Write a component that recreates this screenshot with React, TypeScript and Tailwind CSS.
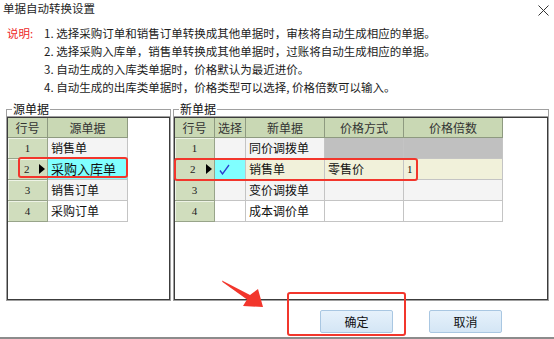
import React from "react";

const FONT = { fontFamily: '"Noto Sans CJK SC", "Noto Sans", sans-serif' };

function Tri() {
  return (
    <svg width="6" height="10" viewBox="0 0 6 10" className="shrink-0">
      <polygon points="0,0 6,5 0,10" fill="#000" />
    </svg>
  );
}

function NumCell({ n, w, mark, pl }: { n: string; w: string; mark?: boolean; pl?: string }) {
  return (
    <div
      className={`${w} h-full flex items-center bg-[#d0ddbd] border-r border-b border-[#98a48a] shadow-[inset_1px_1px_0_#eef3e6] text-[11px] text-[#222] ${mark ? `${pl} pr-[2px]` : "justify-center"}`}
      style={{ fontFamily: '"Liberation Serif", serif' }}
    >
      <span>{n}</span>
      {mark && (
        <span className="ml-auto flex">
          <Tri />
        </span>
      )}
    </div>
  );
}

function Head({ w, children }: { w: string; children?: React.ReactNode }) {
  return (
    <div className={`${w} h-full flex items-center justify-center bg-[#c9d8b4] border-r border-b border-[#8e9a80] text-[12px] text-[#333]`}>
      {children}
    </div>
  );
}

function Cell({ w, bg, children }: { w: string; bg: string; children?: React.ReactNode }) {
  return (
    <div className={`${w} h-full flex items-center pl-[3px] border-r border-b border-[#c4c4c4] text-[12px] text-[#111] ${bg}`}>
      {children}
    </div>
  );
}

function GroupLabel({ label }: { label: string }) {
  return (
    <div className="flex h-[14px]">
      <div className="w-[6px] h-[7px] self-end border-l border-t border-[#a0a0a0]" />
      <div className="text-[12px] leading-[14px] text-[#111] px-[1px]">{label}</div>
      <div className="flex-1 h-[7px] self-end border-r border-t border-[#a0a0a0]" />
    </div>
  );
}

function Frame({ children }: { children: React.ReactNode }) {
  return (
    <div className="h-[185px] border border-[#a0a0a0]">
      <div className="h-full border border-[#3c3c3c] bg-white">{children}</div>
    </div>
  );
}

export default function App() {
  return (
    <div className="w-[554px] h-[339px] bg-white relative overflow-hidden flex flex-col" style={FONT}>
      {/* title */}
      <div className="h-[24px] flex items-start justify-between pl-[3px] pr-[5px]">
        <div className="text-[11.5px] leading-[16px] text-[#1e1e1e]">单据自动转换设置</div>
        <svg width="11" height="11" viewBox="0 0 11 11" className="mt-[5px]">
          <path d="M0.5 0.5 L10.5 10.5 M10.5 0.5 L0.5 10.5" stroke="#333" strokeWidth="1" />
        </svg>
      </div>

      {/* explanation */}
      <div className="flex text-[11.5px] leading-[18px]">
        <div className="w-[44px] pl-[7px] text-[#ee2a2a]">说明:</div>
        <div className="text-[#1c1c1c]">
          <div>1. 选择采购订单和销售订单转换成其他单据时，审核将自动生成相应的单据。</div>
          <div>2. 选择采购入库单，销售单转换成其他单据时，过账将自动生成相应的单据。</div>
          <div>3. 自动生成的入库类单据时，价格默认为最近进价。</div>
          <div>4. 自动生成的出库类单据时，价格类型可以选择, 价格倍数可以输入。</div>
        </div>
      </div>

      {/* group boxes */}
      <div className="flex gap-[2px] pl-[6px] mt-[6px]">
        <div className="w-[165px]">
          <GroupLabel label="源单据" />
          <Frame>
            <div className="flex h-[20px]">
              <Head w="w-[40px]">行号</Head>
              <Head w="w-[80px]">源单据</Head>
            </div>
            <div className="flex h-[21px]">
              <NumCell n="1" w="w-[40px]" />
              <Cell w="w-[80px]" bg="bg-[#f4f4f4]">销售单</Cell>
            </div>
            <div className="flex h-[21px]">
              <NumCell n="2" w="w-[40px]" mark pl="pl-[16px]" />
              <Cell w="w-[80px]" bg="bg-[#80ffff]">
                <span className="text-[13px]">采购入库单</span>
              </Cell>
            </div>
            <div className="flex h-[21px]">
              <NumCell n="3" w="w-[40px]" />
              <Cell w="w-[80px]" bg="bg-[#f4f4f4]">销售订单</Cell>
            </div>
            <div className="flex h-[21px]">
              <NumCell n="4" w="w-[40px]" />
              <Cell w="w-[80px]" bg="bg-white">采购订单</Cell>
            </div>
          </Frame>
        </div>

        <div className="w-[376px]">
          <GroupLabel label="新单据" />
          <Frame>
            <div className="flex h-[20px]">
              <Head w="w-[40px]">行号</Head>
              <Head w="w-[31px]">选择</Head>
              <Head w="w-[79px]">新单据</Head>
              <Head w="w-[79px]">价格方式</Head>
              <Head w="w-[99px]">价格倍数</Head>
            </div>
            <div className="flex h-[21px]">
              <NumCell n="1" w="w-[40px]" />
              <Cell w="w-[31px]" bg="bg-[#f4f4f4]" />
              <Cell w="w-[79px]" bg="bg-[#f4f4f4]">同价调拨单</Cell>
              <Cell w="w-[79px]" bg="bg-[#c0c0c0]" />
              <Cell w="w-[99px]" bg="bg-[#c0c0c0]" />
            </div>
            <div className="flex h-[21px]">
              <NumCell n="2" w="w-[40px]" mark pl="pl-[15px]" />
              <Cell w="w-[31px]" bg="bg-[#80ffff]">
                <svg width="11" height="11" viewBox="0 0 11 11" className="ml-[1px]">
                  <path d="M1 6.5 L3.5 10 L10 1" stroke="#2a3fd0" strokeWidth="1.3" fill="none" />
                </svg>
              </Cell>
              <Cell w="w-[79px]" bg="bg-[#f1f1da]">销售单</Cell>
              <Cell w="w-[79px]" bg="bg-[#f1f1da]">零售价</Cell>
              <Cell w="w-[99px]" bg="bg-[#f1f1da]">
                <span className="text-[11px]" style={{ fontFamily: '"Liberation Serif", serif' }}>1</span>
              </Cell>
            </div>
            <div className="flex h-[21px]">
              <NumCell n="3" w="w-[40px]" />
              <Cell w="w-[31px]" bg="bg-[#f4f4f4]" />
              <Cell w="w-[79px]" bg="bg-[#f4f4f4]">变价调拨单</Cell>
              <Cell w="w-[79px]" bg="bg-[#f4f4f4]" />
              <Cell w="w-[99px]" bg="bg-[#f4f4f4]" />
            </div>
            <div className="flex h-[21px]">
              <NumCell n="4" w="w-[40px]" />
              <Cell w="w-[31px]" bg="bg-white" />
              <Cell w="w-[79px]" bg="bg-white">成本调价单</Cell>
              <Cell w="w-[79px]" bg="bg-white" />
              <Cell w="w-[99px]" bg="bg-white" />
            </div>
          </Frame>
        </div>
      </div>

      {/* buttons */}
      <div className="flex justify-end gap-[36px] pr-[52px] mt-[9px]">
        <button className="w-[73px] h-[23px] border border-[#a9c7e2] bg-gradient-to-b from-[#e6f1fb] to-[#d4e6f5] text-[12px] text-[#111] rounded-[2px]">
          确定
        </button>
        <button className="w-[73px] h-[23px] border border-[#a9c7e2] bg-gradient-to-b from-[#e6f1fb] to-[#d4e6f5] text-[12px] text-[#111] rounded-[2px]">
          取消
        </button>
      </div>
      <div className="mt-auto h-[2px] bg-[#8c8c8c]" />

      {/* annotations */}
      <div className="absolute left-[18px] top-[157px] w-[110px] h-[21px] border-2 border-[#f2362c] rounded-[3px]" />
      <div className="absolute left-[174px] top-[158px] w-[244px] h-[23px] border-2 border-[#f2362c] rounded-[3px]" />
      <div className="absolute left-[287px] top-[292px] w-[119px] h-[44px] border-2 border-[#f2362c] rounded-[3px]" />
      <svg className="absolute left-0 top-0" width="554" height="339" viewBox="0 0 554 339">
        <polygon
          points="222,280.5 250,295 258,289 263,307 243,306 247,299.5 222.5,282"
          fill="#f2362c"
        />
      </svg>
    </div>
  );
}
